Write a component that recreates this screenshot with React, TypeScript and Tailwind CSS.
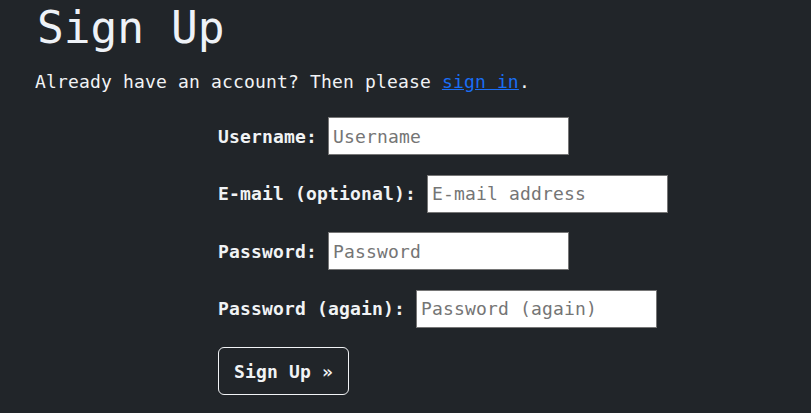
import React from "react";

const mono = { fontFamily: '"DejaVu Sans Mono", "Liberation Mono", monospace' };

function Row({ label, placeholder, type = "text" }: { label: string; placeholder: string; type?: string }) {
  return (
    <div className="flex items-center h-[38px] gap-[11px]">
      <label className="font-bold text-[18px] leading-[27px] tracking-[0.16px] text-[#f1f3f5] whitespace-pre">{label}</label>
      <input
        type={type}
        placeholder={placeholder}
        className="w-[241px] h-[38px] bg-white border border-[#767676] pl-[4px] text-[18px] tracking-[0.16px] text-[#212529] placeholder:text-[#757575] outline-none"
        style={mono}
      />
    </div>
  );
}

export default function App() {
  return (
    <div className="min-h-[413px] w-full bg-[#212529] text-[#f1f3f5]" style={mono}>
      <div className="pl-[35px]">
        <h1 className="pl-[2px] text-[44.5px] leading-[55px] font-normal text-[#eef2f7]">Sign Up</h1>
        <p className="mt-[13px] text-[18px] leading-[27px] tracking-[0.16px] whitespace-pre">
          Already have an account? Then please{" "}
          <a href="#" className="text-[#1a6ef5] underline">sign in</a>.
        </p>
        <form className="ml-[183px] mt-[22px] flex flex-col gap-[19.5px]" onSubmit={(e) => e.preventDefault()}>
          <Row label="Username:" placeholder="Username" />
          <Row label="E-mail (optional):" placeholder="E-mail address" />
          <Row label="Password:" placeholder="Password" type="password" />
          <Row label="Password (again):" placeholder="Password (again)" type="password" />
          <div>
            <button
              type="submit"
              className="h-[48px] px-[15px] border border-[#f1f3f5] rounded-[6px] text-[18px] leading-[27px] tracking-[0.16px] font-bold text-[#f1f3f5] bg-transparent"
              style={mono}
            >
              Sign Up »
            </button>
          </div>
        </form>
      </div>
    </div>
  );
}
